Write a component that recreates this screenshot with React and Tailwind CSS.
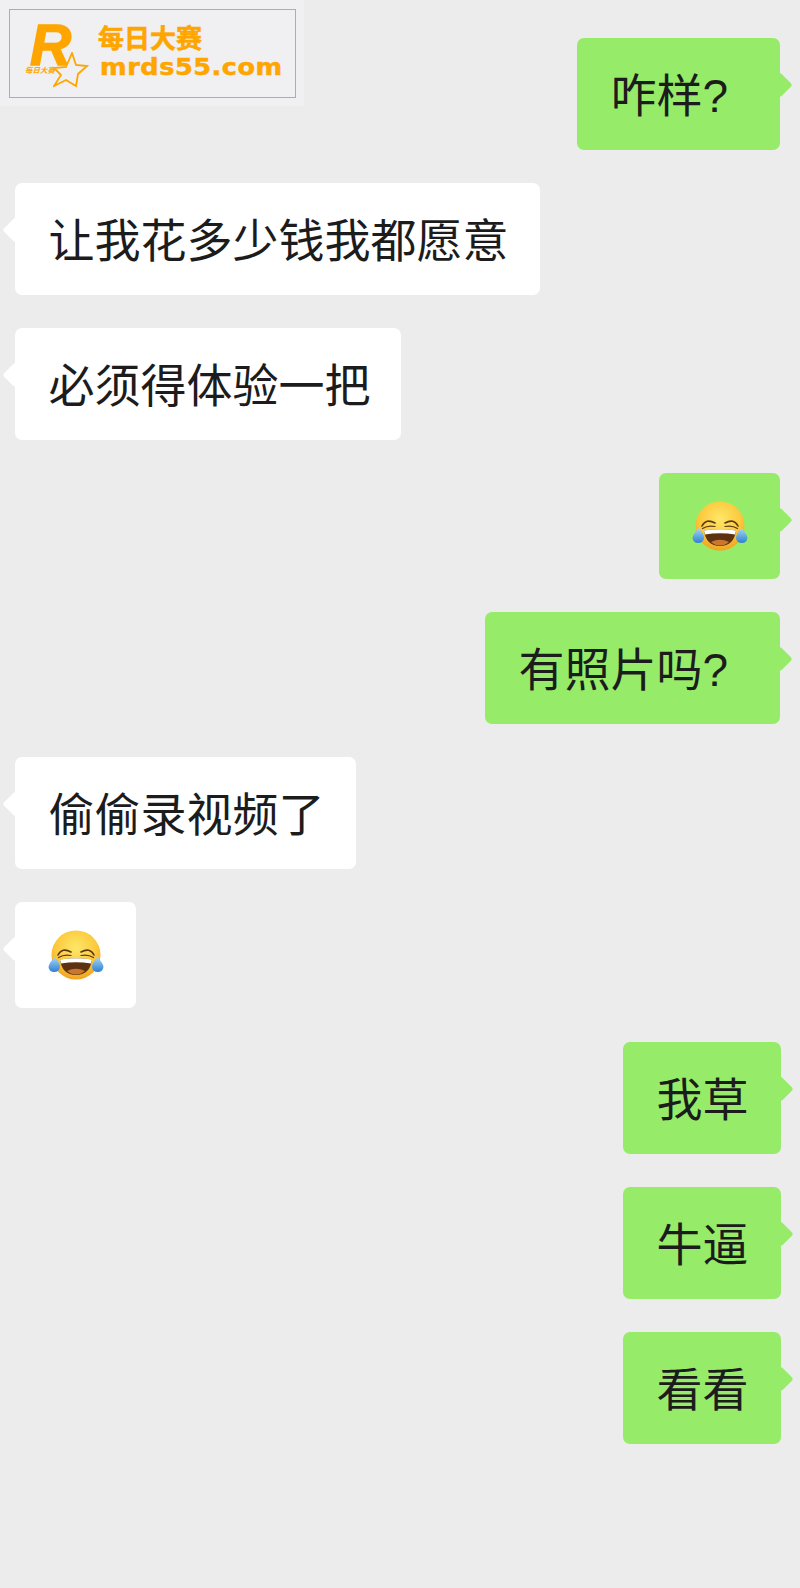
import React from 'react';

// widths are taken per bubble, the screenshot's bubbles don't follow one padding
const messages = [
  { id: 1, side: 'right', text: '咋样', mark: true, box: 'w-[203px]' },
  { id: 2, side: 'left', text: '让我花多少钱我都愿意', box: 'w-[525px]' },
  { id: 3, side: 'left', text: '必须得体验一把', box: 'w-[386px]' },
  { id: 4, side: 'right', emoji: true },
  { id: 5, side: 'right', text: '有照片吗', mark: true, box: 'w-[295px]' },
  { id: 6, side: 'left', text: '偷偷录视频了', box: 'w-[341px]' },
  { id: 7, side: 'left', emoji: true },
  { id: 8, side: 'right', text: '我草', box: 'w-[158px] mt-[1px] mr-[-1px]' },
  { id: 9, side: 'right', text: '牛逼', box: 'w-[158px] mr-[-1px]' },
  { id: 10, side: 'right', text: '看看', box: 'w-[158px] mr-[-1px]' },
];

function LaughEmoji({ uid }) {
  return (
    <svg width="58" height="54" viewBox="0 0 58 54">
      <defs>
        <radialGradient id={`face${uid}`} cx="0.5" cy="0.35" r="0.7">
          <stop offset="0" stopColor="#fde768" />
          <stop offset="0.6" stopColor="#fcc93c" />
          <stop offset="1" stopColor="#ee9a1c" />
        </radialGradient>
        <linearGradient id={`tear${uid}`} x1="0" y1="0" x2="0" y2="1">
          <stop offset="0" stopColor="#a5d8f7" />
          <stop offset="1" stopColor="#2f80d0" />
        </linearGradient>
      </defs>
      <circle cx="29" cy="27" r="24.5" fill={`url(#face${uid})`} />
      <path d="M11 27 Q15 19 24 24" fill="none" stroke="#5b3a14" strokeWidth="1.6" strokeLinecap="round" />
      <path d="M34 24 Q43 19 47 27" fill="none" stroke="#5b3a14" strokeWidth="1.6" strokeLinecap="round" />
      <path d="M11.5 29.5 Q17 26 24 27.5" fill="none" stroke="#5b3a14" strokeWidth="1.2" strokeLinecap="round" />
      <path d="M34 27.5 Q41 26 46.5 29.5" fill="none" stroke="#5b3a14" strokeWidth="1.2" strokeLinecap="round" />
      <path d="M13 31.5 Q29 29 45 31.5 Q43 47 29 47 Q15 47 13 31.5 Z" fill="#5c3211" />
      <path d="M13 31.5 Q29 29 45 31.5 L44 35.5 Q29 33 14 35.5 Z" fill="#ffffff" />
      <path d="M20 43 Q29 38.5 38 43 Q34 46.5 29 46.5 Q24 46.5 20 43 Z" fill="#c9772e" />
      <path d="M7.5 29 Q1.5 36 1.5 39 A5.8 5.8 0 0 0 13 39 Q13 35 7.5 29 Z" fill={`url(#tear${uid})`} />
      <path d="M50.5 29 Q56.5 36 56.5 39 A5.8 5.8 0 0 1 45 39 Q45 35 50.5 29 Z" fill={`url(#tear${uid})`} />
    </svg>
  );
}

function Logo() {
  return (
    <div className="absolute top-0 left-0 w-[304px] h-[106px] bg-[#f0f0f2] pt-[9px] pl-[9px]">
      <div className="w-[287px] h-[89px] border-[1.5px] border-[#ffa500] flex text-[#ffa500] pl-[17px]">
        <div className="relative w-[62px] shrink-0">
          <span className="absolute left-[3px] top-[7px] text-[57px] leading-[57px] font-bold italic font-['Liberation_Sans',sans-serif] [-webkit-text-stroke:1.5px_#ffa500]">R</span>
          <span className="absolute left-[-2px] top-[55px] text-[7.5px] leading-[10px] font-bold italic whitespace-nowrap font-['Noto_Sans_CJK_SC',sans-serif]">每日大赛</span>
          <svg className="absolute left-[26px] top-[42px]" width="36" height="36" viewBox="0 0 36 36">
            <path d="M19 1 L23 13 L34 14 L25 22 L23 34 L13 28 L1 34 L8 23 L1 16 L13 15 Z" fill="#f0f0f2" stroke="#ffa500" strokeWidth="1.8" />
          </svg>
        </div>
        <div className="flex flex-col pl-[9px] pt-[12px]">
          <span className="text-[26px] leading-[30px] font-bold whitespace-nowrap font-['Noto_Sans_CJK_SC',sans-serif] [-webkit-text-stroke:0.6px_#ffa500]">每日大赛</span>
          <span className="mt-[2px] ml-[2px] text-[23px] leading-[26px] font-bold tracking-[0.5px] whitespace-nowrap origin-left scale-x-[1.11] font-['DejaVu_Sans',sans-serif] [-webkit-text-stroke:0.5px_#ffa500]">mrds55.com</span>
        </div>
      </div>
    </div>
  );
}

function Bubble({ id, side, text, mark, emoji, box }) {
  const isRight = side === 'right';
  return (
    <div className={`relative rounded-[7px] ${isRight ? 'self-end bg-[#96ec69]' : 'self-start bg-white'} ${emoji ? 'w-[121px] h-[106px] flex items-center justify-center' : 'h-[112px] pl-[33.5px] text-[46px] leading-[108px] text-[#1c1c1c]'} ${box || ''}`}>
      <div className={`absolute top-[38px] w-[18px] h-[18px] rotate-45 rounded-[3px] ${isRight ? 'right-[-9px] bg-[#96ec69]' : 'left-[-9px] bg-white'}`}></div>
      {emoji ? (
        <LaughEmoji uid={id} />
      ) : (
        <span className="relative whitespace-nowrap">
          {text}
          {mark && <span className="font-['Liberation_Sans',sans-serif]">?</span>}
        </span>
      )}
    </div>
  );
}

export default function App() {
  return (
    <div className="relative w-[800px] min-h-[1588px] bg-[#ececec] pt-[38px] pl-[15px] pr-[20px] font-['Noto_Sans_CJK_SC',sans-serif]">
      <Logo />
      <div className="flex flex-col gap-[33px]">
        {messages.map(m => (
          <Bubble key={m.id} {...m} />
        ))}
      </div>
    </div>
  );
}
